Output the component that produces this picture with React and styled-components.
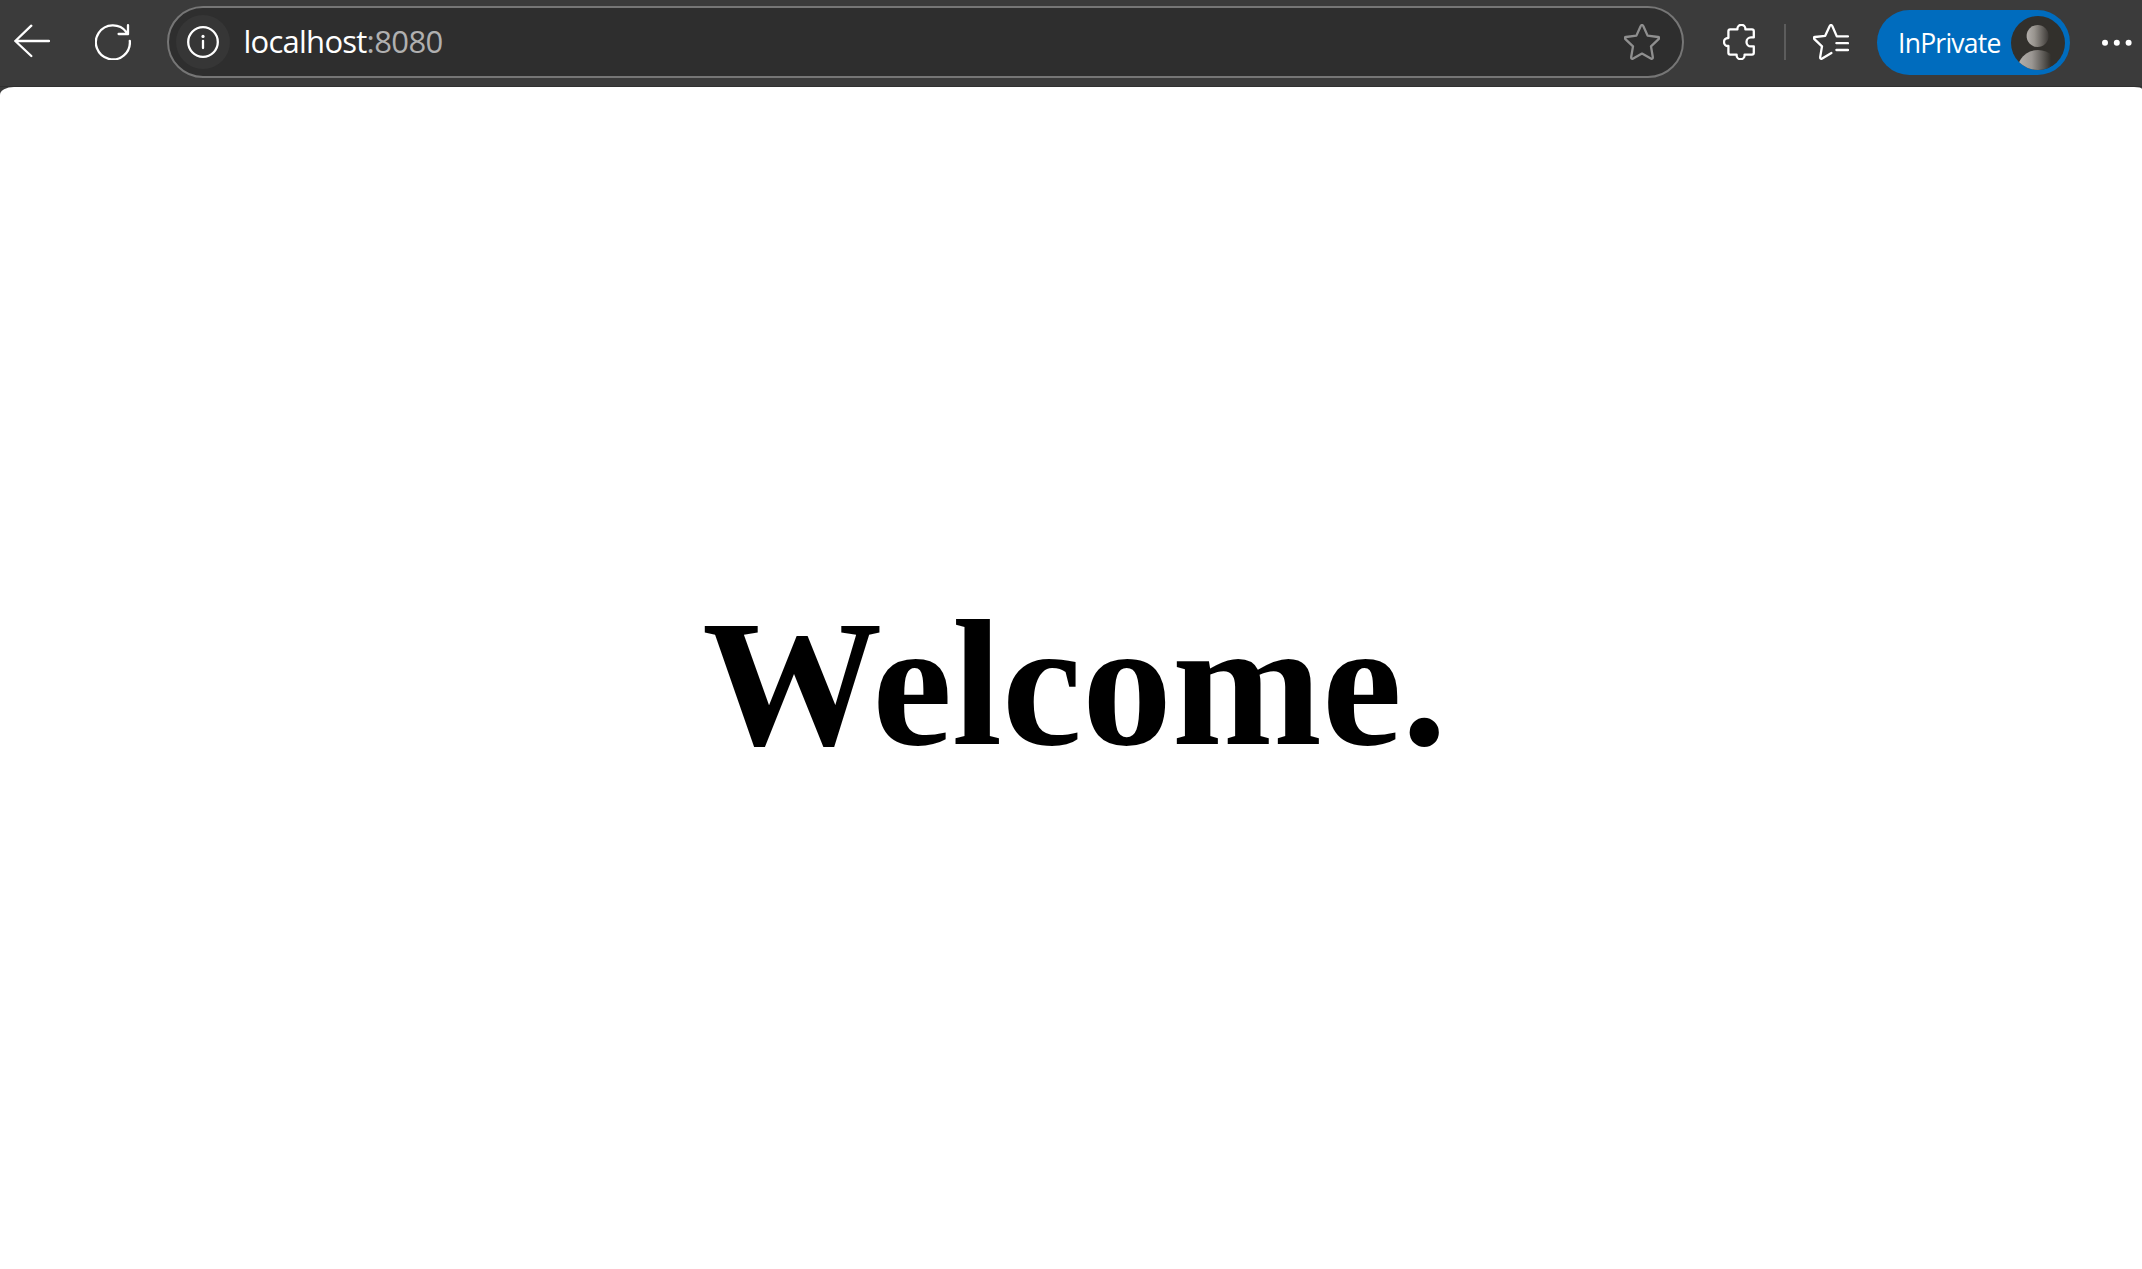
import React from "react";
import styled, { createGlobalStyle } from "styled-components";

const GlobalStyle = createGlobalStyle`
  * { box-sizing: border-box; }
  body { margin: 0; background: #3b3b3b; overflow: hidden; }
`;

const Window = styled.div`
  display: flex;
  flex-direction: column;
  width: 100%;
  height: 100vh;
  background: #3b3b3b;
  font-family: "Open Sans", "Noto Sans", sans-serif;
`;

const Toolbar = styled.header`
  display: flex;
  align-items: flex-start;
  flex: none;
  height: 87px;
  padding: 6px 0 0 8px;
  border-bottom: 1px solid #303030;
`;

const IconButton = styled.button`
  display: flex;
  align-items: center;
  justify-content: center;
  flex: none;
  width: 48px;
  height: 72px;
  margin: 0 0 0 ${(p) => p.$gap || 0}px;
  padding: 0;
  border: 0;
  background: none;
  color: ${(p) => p.$color || "#fff"};
`;

const Glyph = styled.svg`
  display: block;
  fill: none;
  stroke: currentColor;
  stroke-width: 2.3;
  stroke-linecap: round;
  stroke-linejoin: round;
`;

const AddressBar = styled.div`
  display: flex;
  align-items: center;
  flex: none;
  width: 1517px;
  height: 72px;
  margin-left: 30px;
  padding: 0 16px 0 7px;
  border: 2px solid #767676;
  border-radius: 36px;
  background: #2e2e2e;
`;

const SiteInfo = styled.span`
  display: flex;
  align-items: center;
  justify-content: center;
  width: 54px;
  height: 54px;
  border-radius: 50%;
  background: #363636;
  color: #fff;
`;

const Url = styled.span`
  flex: 1;
  margin-left: 13.5px;
  padding-bottom: 2px;
  font-size: 31px;
  line-height: 42px;
  letter-spacing: -0.75px;
  color: #fff;
`;

const Port = styled.span`
  color: #b0b0b0;
  letter-spacing: -0.6px;
`;

const Divider = styled.span`
  flex: none;
  width: 2px;
  height: 36px;
  margin: 18px 0 0 21px;
  background: #5c5c5c;
`;

const ProfilePill = styled.div`
  display: flex;
  align-items: center;
  flex: none;
  justify-content: space-between;
  width: 193px;
  height: 65px;
  margin: 4px 0 0 22px;
  padding: 0 5px 0 21px;
  border-radius: 33px;
  background: #006cbe;
  color: #fff;
  font-size: 26.5px;
  line-height: 36px;
  letter-spacing: -0.75px;
`;

const Page = styled.main`
  display: flex;
  align-items: center;
  justify-content: center;
  flex: 1;
  padding: 11px 0 0 7px;
  border-radius: 14px 8px 0 0 / 8px 2px 0 0;
  background: #fff;
`;

const Heading = styled.h1`
  margin: 0;
  font-family: "Liberation Serif", "Times New Roman", serif;
  font-size: 180px;
  font-weight: 700;
  line-height: 207px;
  color: #000;
`;

const STAR =
  "M16.6 2.2Q18 -.4 19.4 2.2L23.6 11.6L34 13Q36.4 13.4 34.6 15.2L27 22.4L28.8 33Q29 35.6 26.8 34.4L18 29.6L9.2 34.4Q7 35.6 7.2 33L9 22.4L1.4 15.2Q-.4 13.4 2 13L12.4 11.6Z";

function BackIcon() {
  return (
    <Glyph width="36" height="36" viewBox="0 0 36 36">
      <path d="M17.3 1.7L1.3 17L17.3 32M1.3 17H35" />
    </Glyph>
  );
}

function ReloadIcon() {
  return (
    <Glyph width="36" height="36" viewBox="0 0 36 36">
      <path d="M34.8 16.8A17 17 0 1 1 31.5 8.2L33 10M33 1.2V10H23.6" />
    </Glyph>
  );
}

function InfoIcon() {
  return (
    <Glyph width="32" height="32" viewBox="0 0 32 32">
      <circle cx="16" cy="16" r="14.8" />
      <path d="M16 14.8V22" />
      <circle cx="16" cy="10.4" r="1.6" fill="currentColor" stroke="none" />
    </Glyph>
  );
}

function StarIcon() {
  return (
    <Glyph width="36" height="36" viewBox="0 0 36 36">
      <path d={STAR} />
    </Glyph>
  );
}

function PuzzleIcon() {
  return (
    <Glyph width="32" height="36" viewBox="0 0 32 36">
      <path d="M5.4 7.2Q5.4 5.4 7.2 5.4H14.4V4.8A4 4 0 0 1 22.4 4.8V5.4H29Q30.8 5.4 30.8 7.2V13.4H28A4.5 4.5 0 0 0 28 22.4H30.8V28.8Q30.8 30.6 29 30.6H21.6V31.2A4 4 0 0 1 13.6 31.2V30.6H7.2Q5.4 30.6 5.4 28.8V22H5A4 4 0 0 1 5 14H5.4Z" />
    </Glyph>
  );
}

function FavoritesIcon() {
  return (
    <Glyph width="36" height="36" viewBox="0 0 36 36">
      <path d="M35 12.4H23.8L19.4 2.2Q18 -.4 16.6 2.2L12.2 11.8L2 13Q-.4 13.4 1.4 15.2L9 22.4L7.2 33Q7 35.6 9.2 34.4L18.4 29M23.4 19.2H35M23.4 26H35" />
    </Glyph>
  );
}

function Avatar() {
  return (
    <svg width="54" height="54" viewBox="0 0 54 54">
      <defs>
        <linearGradient id="head" x1="0" x2="1">
          <stop offset="0" stopColor="#b3afab" />
          <stop offset=".35" stopColor="#99958f" />
          <stop offset="1" stopColor="#3d3a37" />
        </linearGradient>
        <linearGradient id="body" gradientUnits="userSpaceOnUse" x1="8" x2="40">
          <stop offset="0" stopColor="#b3afab" />
          <stop offset=".4" stopColor="#9b9793" />
          <stop offset="1" stopColor="#32302c" />
        </linearGradient>
        <clipPath id="disc">
          <circle cx="27" cy="27" r="27" />
        </clipPath>
      </defs>
      <g clipPath="url(#disc)">
        <rect width="54" height="54" fill="#32302c" />
        <circle cx="26.6" cy="20" r="11" fill="url(#head)" />
        <circle cx="27" cy="55" r="21" fill="url(#body)" />
      </g>
    </svg>
  );
}

function MoreIcon() {
  return (
    <svg width="30" height="8" viewBox="0 0 30 8" fill="currentColor">
      <circle cx="3" cy="4.7" r="3" />
      <circle cx="14.8" cy="4.7" r="3" />
      <circle cx="26.6" cy="4.7" r="3" />
    </svg>
  );
}

export default function App() {
  return (
    <>
      <GlobalStyle />
      <Window>
        <Toolbar>
          <IconButton aria-label="Back"><BackIcon /></IconButton>
          <IconButton $gap={33} aria-label="Refresh"><ReloadIcon /></IconButton>
          <AddressBar>
            <SiteInfo><InfoIcon /></SiteInfo>
            <Url>localhost<Port>:8080</Port></Url>
            <IconButton $color="#8f8f8f" aria-label="Favorite"><StarIcon /></IconButton>
          </AddressBar>
          <IconButton $gap={31} aria-label="Extensions"><PuzzleIcon /></IconButton>
          <Divider />
          <IconButton $gap={21} aria-label="Favorites"><FavoritesIcon /></IconButton>
          <ProfilePill>
            <span>InPrivate</span>
            <Avatar />
          </ProfilePill>
          <IconButton $gap={23} aria-label="Settings and more"><MoreIcon /></IconButton>
        </Toolbar>
        <Page>
          <Heading>Welcome.</Heading>
        </Page>
      </Window>
    </>
  );
}
